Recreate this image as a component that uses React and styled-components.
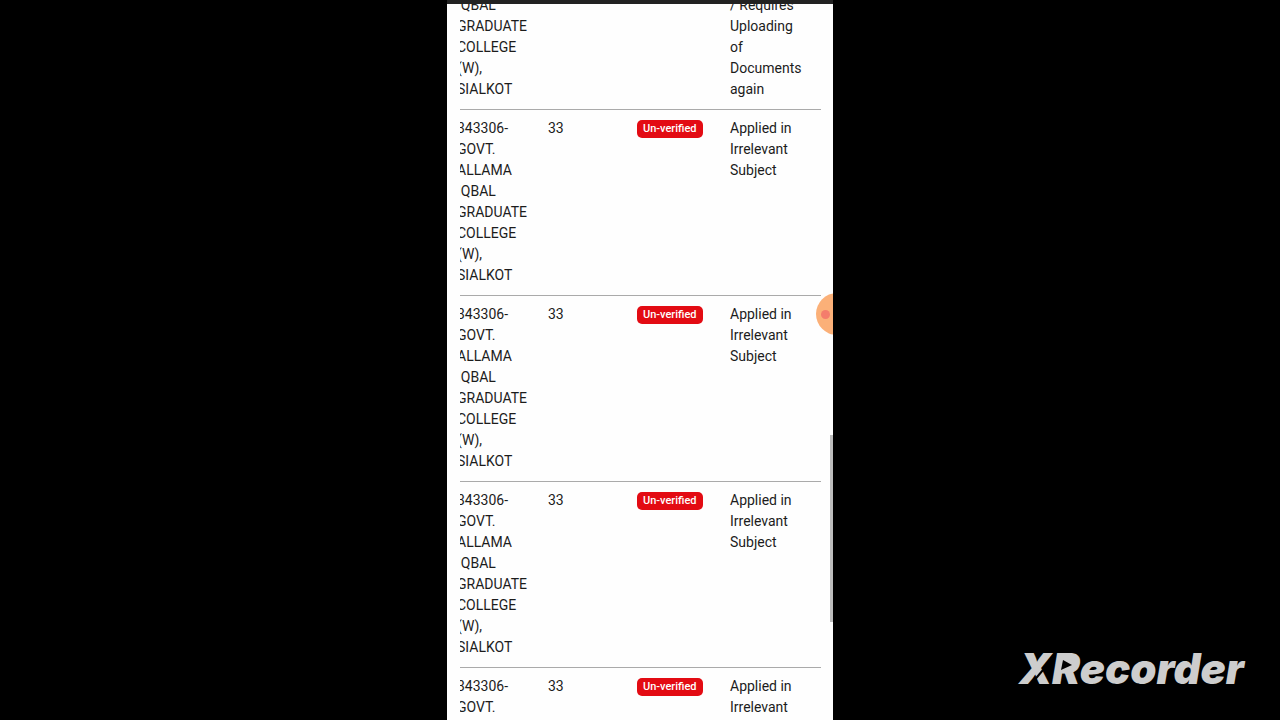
import styled, { createGlobalStyle } from "styled-components";

const GlobalStyle = createGlobalStyle`
  * {
    box-sizing: border-box;
  }

  body {
    margin: 0;
    background: #000;
    font-family: Roboto, "Liberation Sans", sans-serif;
  }
`;

const Stage = styled.div`
  position: relative;
  display: flex;
  justify-content: center;
  height: 100vh;
  overflow: hidden;
  background: #000;
`;

const Phone = styled.main`
  position: relative;
  display: flex;
  flex-direction: column;
  width: 100%;
  max-width: 386px;
  overflow: hidden;
  background: #fefefe;
`;

const TopBar = styled.div`
  flex: none;
  height: 4px;
  background: #222;
`;

const TableViewport = styled.div`
  flex: 1;
  min-height: 0;
  margin: 0 12px 0 13px;
  overflow: hidden;
`;

/* Scrolled a little to the right and part of the way down the list */
const Table = styled.table`
  width: calc(100% + 11px);
  margin: -9px 0 0 -11px;
  border-collapse: separate;
  border-spacing: 0;
  table-layout: fixed;
  color: #1c1c1c;
  font-size: 14px;
  line-height: 21px;
`;

const Column = styled.col`
  width: ${({ $width }) => $width || "auto"};
`;

const Cell = styled.td`
  padding: 8px 8px 9px;
  border-bottom: 1px solid #aaa;
  text-align: left;
  vertical-align: top;
`;

const RemarksCell = styled(Cell)`
  padding-right: 16px;
`;

const PartialRow = styled.tr`
  ${Cell} {
    padding-top: 0;
  }
`;

const Badge = styled.span`
  display: inline-block;
  padding: 0 6px;
  border-radius: 5px;
  background: #e30b13;
  color: #fff;
  font-size: 11px;
  font-weight: 500;
  line-height: 18px;
  vertical-align: middle;
  white-space: nowrap;
`;

const ScrollThumb = styled.div`
  position: absolute;
  top: 435px;
  right: 0;
  width: 3px;
  height: 187px;
  background: #bdbdbd;
`;

const Bubble = styled.button`
  position: absolute;
  top: 293px;
  right: -25px;
  display: flex;
  align-items: center;
  width: 42px;
  height: 42px;
  padding: 0 5px;
  border: 0;
  border-radius: 50%;
  background: #fbb078;
`;

const RecordDot = styled.span`
  width: 9px;
  height: 9px;
  border-radius: 50%;
  background: #f47c6c;
`;

const Watermark = styled.div`
  position: absolute;
  right: 36px;
  bottom: 29px;
  color: #cdcdcd;
  font-family: Inter, sans-serif;
  font-size: 42px;
  font-style: italic;
  font-weight: 900;
  line-height: 44px;
`;

/* The slit in the X and the play mark in the R */
const WatermarkCuts = styled.svg`
  position: absolute;
  top: 0;
  left: 0;
`;

const college = "343306-GOVT. ALLAMA IQBAL GRADUATE COLLEGE (W), SIALKOT";

const applications = [1, 2, 3, 4].map((id) => ({
  id,
  college,
  marks: 33,
  status: "Un-verified",
  remarks: "Applied in Irrelevant Subject",
}));

export default function App() {
  return (
    <>
      <GlobalStyle />
      <Stage>
        <Phone>
          <TopBar />
          <TableViewport>
            <Table>
              <colgroup>
                <Column $width="91px" />
                <Column $width="89px" />
                <Column $width="93px" />
                <Column />
              </colgroup>
              <tbody>
                <PartialRow>
                  <Cell>IQBAL GRADUATE COLLEGE (W), SIALKOT</Cell>
                  <Cell />
                  <Cell />
                  <RemarksCell>
                    / Requires Uploading of Documents again
                  </RemarksCell>
                </PartialRow>
                {applications.map((item) => (
                  <tr key={item.id}>
                    <Cell>{item.college}</Cell>
                    <Cell>{item.marks}</Cell>
                    <Cell>
                      <Badge>{item.status}</Badge>
                    </Cell>
                    <RemarksCell>{item.remarks}</RemarksCell>
                  </tr>
                ))}
              </tbody>
            </Table>
          </TableViewport>
          <ScrollThumb />
          <Bubble type="button" aria-label="Record">
            <RecordDot />
          </Bubble>
        </Phone>
        <Watermark>
          XRecorder
          <WatermarkCuts width="72" height="44" viewBox="0 0 72 44" aria-hidden="true">
            <path d="M13 36 L24 23" stroke="#000" strokeWidth="2" />
            <path d="M42 12 H54 L52 24 H40 Z" fill="#cdcdcd" />
            <path d="M44 13 L53 18 L42 23 Z" fill="#000" />
          </WatermarkCuts>
        </Watermark>
      </Stage>
    </>
  );
}
